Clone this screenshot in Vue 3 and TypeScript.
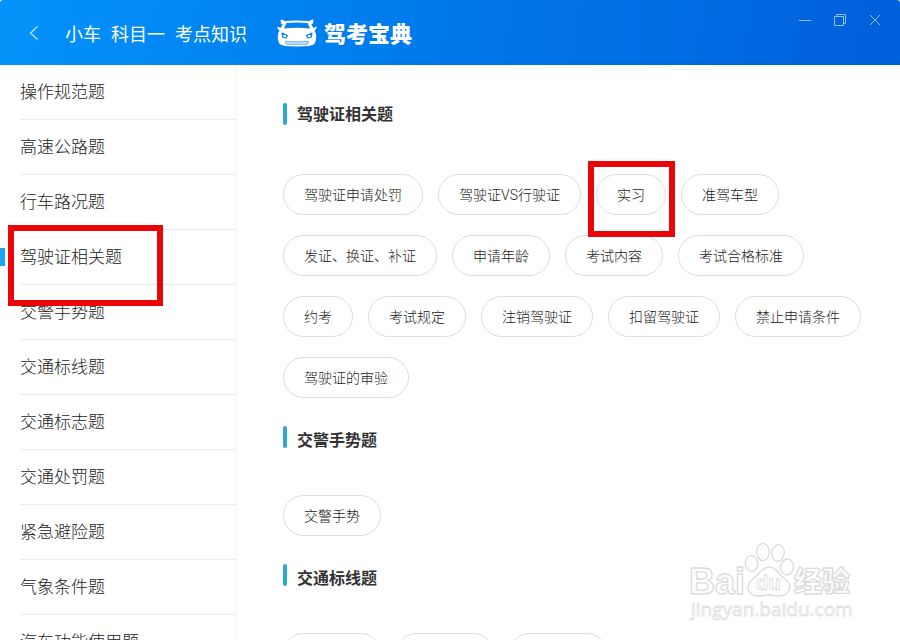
<script setup lang="ts">
import { ref } from 'vue'

interface Section {
  title: string
  topics: string[]
}

const crumbs: string[] = ['小车', '科目一', '考点知识']

const categories: string[] = [
  '操作规范题',
  '高速公路题',
  '行车路况题',
  '驾驶证相关题',
  '交警手势题',
  '交通标线题',
  '交通标志题',
  '交通处罚题',
  '紧急避险题',
  '气象条件题',
  '汽车功能使用题',
]

const sections: Section[] = [
  {
    title: '驾驶证相关题',
    topics: [
      '驾驶证申请处罚',
      '驾驶证VS行驶证',
      '实习',
      '准驾车型',
      '发证、换证、补证',
      '申请年龄',
      '考试内容',
      '考试合格标准',
      '约考',
      '考试规定',
      '注销驾驶证',
      '扣留驾驶证',
      '禁止申请条件',
      '驾驶证的审验',
    ],
  },
  { title: '交警手势题', topics: ['交警手势'] },
  { title: '交通标线题', topics: ['指示标线', '禁止标线', '警告标线'] },
]

const active = ref<string>('驾驶证相关题')
</script>

<template>
  <div class="window">
    <header class="topbar">
      <button class="icon-button back" aria-label="返回">
        <svg width="10" height="16" viewBox="0 0 10 16"><path d="M8.500 1.500 1.500 8l7 6.500" /></svg>
      </button>
      <nav class="crumbs">
        <span v-for="crumb in crumbs" :key="crumb">{{ crumb }}</span>
      </nav>
      <div class="brand">
        <svg class="car" width="40" height="28" viewBox="0 0 40 28">
          <path
            fill="#fff"
            d="M4.500 .5 8 2Q20 1 32 2L35.500 .5 36.500 1 36 4.500 34.300 5.200 36.500 9 39.500 7.500V9.500L37.500 11.500Q39.800 15 39 21L37.500 25Q35 27.500 20 27.500T2.500 25L1 21Q.2 15 2.500 11.500L.5 9.500V7.500L3.500 9 5.700 5.200 4 4.500 3.500 1Z"
          />
          <path fill="#0881ee" d="M9.500 4Q20 2.800 30.500 4L33 9.500Q20 8 7 9.500Z" />
          <path
            fill="#fff"
            stroke="#0881ee"
            stroke-width="1.200"
            stroke-linejoin="round"
            d="M5 14 10.500 16.500 9 19 6 18.500ZM35 14 29.500 16.500 31 19 34 18.500Z"
          />
          <path fill="#b9dcfb" stroke="#4fa5f2" stroke-width=".6" d="M8 22.500H32L30.500 25.500H9.500Z" />
        </svg>
        <strong class="brand-name">驾考宝典</strong>
      </div>
      <div class="window-controls">
        <button class="icon-button" aria-label="最小化">
          <svg width="14" height="14" viewBox="0 0 14 14"><path d="M1 7.500h12" /></svg>
        </button>
        <button class="icon-button" aria-label="还原">
          <svg width="14" height="14" viewBox="0 0 14 14"><path d="M1.500 3.500h9v9h-9zM3.500 3.500v-2h9v9h-2" /></svg>
        </button>
        <button class="icon-button" aria-label="关闭">
          <svg width="14" height="14" viewBox="0 0 14 14"><path d="m2 2 10 10M12 2 2 12" /></svg>
        </button>
      </div>
    </header>

    <div class="body">
      <aside class="sidebar">
        <button
          v-for="category in categories"
          :key="category"
          class="category"
          :class="{ active: category === active }"
          @click="active = category"
        >
          <span class="category-label">{{ category }}</span>
        </button>
      </aside>

      <main class="content">
        <section v-for="section in sections" :key="section.title" class="section">
          <h2 class="title">{{ section.title }}</h2>
          <div class="topics">
            <button v-for="topic in section.topics" :key="topic" class="topic">{{ topic }}</button>
          </div>
        </section>
      </main>
    </div>

    <div class="marker marker-category"></div>
    <div class="marker marker-topic"></div>

    <svg class="watermark" width="170" height="84" viewBox="0 0 170 84">
      <g fill="#fff" stroke="#dcdcdc" stroke-width="1.300">
        <text class="mark-latin" x="2" y="53" font-size="36">Bai</text>
        <ellipse cx="64.500" cy="22.500" rx="6.200" ry="8" transform="rotate(-6 64.500 22.500)" />
        <ellipse cx="76" cy="11" rx="6.300" ry="8.500" />
        <ellipse cx="91" cy="12" rx="6.300" ry="8.300" transform="rotate(8 91 12)" />
        <ellipse cx="100" cy="26" rx="6.300" ry="8" transform="rotate(8 100 26)" />
        <path d="M82 26C75 26 73 33 66 38C58 44 60 55 71 55C76 55 77 54 82 54S88 55 92 55C103 55 106 44 98 38C91 33 89 26 82 26Z" />
        <text class="mark-latin" x="69" y="49" font-size="20" stroke-width="0.800">du</text>
        <text class="mark-cjk" x="107" y="51" font-size="28">经验</text>
      </g>
      <text class="mark-url" x="4" y="75" font-size="19">jingyan.baidu.com</text>
    </svg>
  </div>
</template>

<style>
body {
  background: #fff;
}
</style>

<style scoped>
.window {
  position: relative;
  display: flex;
  flex-direction: column;
  height: 100vh;
  overflow: hidden;
  background: #fff;
  color: #222;
  font-family: 'Noto Sans CJK SC', sans-serif;
  font-weight: 300;
}

button {
  margin: 0;
  border: 0;
  background: none;
  color: inherit;
  font: inherit;
  cursor: pointer;
}

.topbar {
  display: flex;
  flex: none;
  align-items: center;
  height: 65px;
  padding: 0 18px 0 24px;
  border-radius: 3px 3px 0 0;
  background: linear-gradient(100deg, #0593fa, #0083f0 30%, #0061dc 95%);
  color: #fff;
}

.icon-button {
  display: flex;
  align-items: center;
  justify-content: center;
  padding: 0;
}

.icon-button svg {
  fill: none;
  stroke: #8fc4f7;
}

.back {
  width: 20px;
  height: 24px;
}

.back svg {
  stroke: #b8e6ff;
  stroke-width: 1.3;
}

.crumbs {
  display: flex;
  gap: 10px;
  margin-left: 21px;
  font-size: 18px;
  font-weight: 400;
  line-height: 24px;
}

.brand {
  display: flex;
  gap: 7px;
  align-items: center;
  margin-left: 30px;
}

.brand-name {
  padding-bottom: 2px;
  font-size: 22px;
  font-weight: 900;
  line-height: 26px;
}

.window-controls {
  display: flex;
  gap: 21px;
  align-self: flex-start;
  margin-top: 13px;
  margin-left: auto;
}

.body {
  display: flex;
  flex: 1;
  min-height: 0;
}

.sidebar {
  flex: none;
  width: 235px;
  overflow: hidden;
  border-right: 2px solid #f7f7f7;
}

.category {
  position: relative;
  display: block;
  width: 100%;
  height: 55px;
  padding: 0 0 0 20px;
  font-size: 17px;
  text-align: left;
}

.category-label {
  display: block;
  height: 55px;
  border-bottom: 1px solid #ebebeb;
  box-sizing: border-box;
  line-height: 52px;
}

.category.active::before {
  content: '';
  position: absolute;
  top: 18px;
  left: 0;
  width: 5px;
  height: 18px;
  background: #1ea5f0;
}

.content {
  flex: 1;
  min-width: 0;
  padding: 38px 30px 0 46px;
  overflow: hidden;
}

.section {
  margin-bottom: 28px;
}

.title {
  position: relative;
  height: 22px;
  margin: 0 0 49px;
  padding-left: 14px;
  color: #333;
  font-size: 16px;
  font-weight: 700;
  line-height: 20px;
}

.title::before {
  content: '';
  position: absolute;
  top: 0;
  left: 0;
  width: 4px;
  height: 22px;
  border-radius: 2px;
  background: #2ba5dc;
}

.section + .section .title {
  margin-bottom: 47px;
  line-height: 26px;
}

.topics {
  display: flex;
  flex-wrap: wrap;
  gap: 20px 15px;
}

.topic {
  height: 41px;
  padding: 0 20px;
  border: 1px solid #ddd;
  border-radius: 21px;
  font-family: Roboto, 'Noto Sans CJK SC', sans-serif;
  font-size: 14px;
  line-height: 41px;
}

.marker {
  position: absolute;
  box-sizing: border-box;
  border: 6px solid #ea0508;
  pointer-events: none;
}

.marker-category {
  top: 225px;
  left: 8px;
  width: 155px;
  height: 81px;
}

.marker-topic {
  top: 161px;
  left: 588px;
  width: 87px;
  height: 76px;
}

.watermark {
  position: absolute;
  right: 43px;
  bottom: 15px;
  pointer-events: none;
}

.mark-latin {
  font-family: 'Liberation Sans', sans-serif;
  font-weight: 700;
}

.mark-cjk {
  font-family: 'Noto Sans CJK SC', sans-serif;
  font-weight: 900;
}

.mark-url {
  fill: #fff;
  stroke: #dedede;
  stroke-width: 0.8;
  font-family: 'Open Sans', sans-serif;
  font-weight: 400;
}
</style>
